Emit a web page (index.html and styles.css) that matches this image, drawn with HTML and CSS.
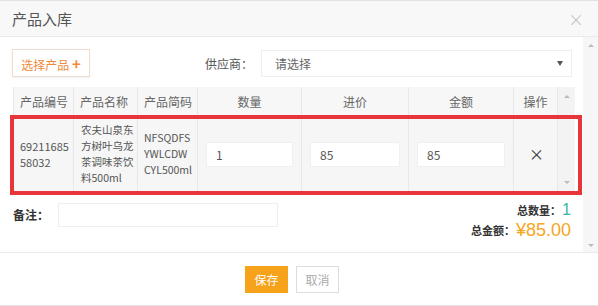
FILE: index.html
```html
<!DOCTYPE html>
<html lang="zh-CN">
<head>
<meta charset="utf-8">
<link rel="stylesheet" href="styles.css">
</head>
<body>
<div class="modal">
  <div class="hd">
    <span class="title">产品入库</span>
    <span class="close">×</span>
  </div>
  <div class="bd">
    <div class="bd-main">
      <div class="toolbar">
        <button class="pick">选择产品 <b class="plus">+</b></button>
        <label class="sup-label">供应商：</label>
        <div class="select"><span>请选择</span><i class="caret"></i></div>
      </div>
      <div class="grid">
        <div class="tbl-wrap">
          <table class="tbl">
            <colgroup>
              <col style="width:60px"><col style="width:64px"><col style="width:60px"><col style="width:104px"><col style="width:107px"><col style="width:105px"><col style="width:44px">
            </colgroup>
            <thead>
              <tr><th>产品编号</th><th>产品名称</th><th>产品简码</th><th class="c">数量</th><th class="c">进价</th><th class="c">金额</th><th class="c">操作</th></tr>
            </thead>
            <tbody>
              <tr>
                <td class="code">69211685<br>58032</td>
                <td class="name">农夫山泉东方树叶乌龙茶调味茶饮料500ml</td>
                <td class="abbr">NFSQDFS<br>YWLCDW<br>CYL500ml</td>
                <td class="num"><div class="inp">1</div></td>
                <td class="num"><div class="inp">85</div></td>
                <td class="num"><div class="inp">85</div></td>
                <td class="c x">×</td>
              </tr>
            </tbody>
          </table>
          <div class="iscroll"><span class="arr up"></span><span class="arr dn"></span></div>
        </div>
        <div class="redbox"></div>
      </div>
      <div class="bottom">
        <div class="remark">
          <span class="rlabel">备注：</span>
          <div class="rinput"></div>
        </div>
        <div class="totals">
          <div class="tq">总数量：<span class="qn">1</span></div>
          <div class="ta">总金额：<span class="amt">¥85.00</span></div>
        </div>
      </div>
    </div>
    <div class="oscroll"><span class="arr up"></span><span class="arr dn"></span></div>
  </div>
  <div class="ft">
    <button class="btn save">保存</button>
    <button class="btn cancel">取消</button>
  </div>
</div>
</body>
</html>
```
FILE: styles.css
```css
* { box-sizing: border-box; }
html, body { margin: 0; padding: 0; background: #fff; }
body {
  font-family: "Noto Sans CJK SC", "Open Sans", sans-serif;
  color: #555;
  width: 598px;
  height: 306px;
  overflow: hidden;
}
.modal {
  width: 598px;
  height: 306px;
  border-top: 1px solid #e2e2e2;
  border-bottom: 1px solid #e2e2e2;
  display: flex;
  flex-direction: column;
}
.hd {
  height: 36px;
  background: #f8f8f8;
  border-bottom: 1px solid #eaeaea;
  display: flex;
  align-items: center;
  justify-content: space-between;
  padding: 0 14px 0 12px;
}
.title { font-size: 15px; color: #555; }
.close { font-size: 16px; color: #bbb; line-height: 1; font-weight: 300; }
.bd {
  height: 216px;
  display: flex;
  border-bottom: 1px solid #eaeaea;
}
.bd-main {
  flex: 1;
  padding: 12px 0 0 12px;
}
.toolbar {
  display: flex;
  align-items: center;
  height: 28px;
}
.pick {
  width: 78px;
  height: 28px;
  border: 1px solid #f1ddd0;
  background: #fff;
  color: #f08a3a;
  font-family: inherit;
  font-size: 12px;
  padding: 0;
  box-shadow: 0 1px 2px rgba(0,0,0,0.06);
}
.plus { font-size: 15px; font-weight: 700; color: #f08a3a; }
.sup-label { margin-left: 115px; font-size: 12px; color: #555; width: 56px; }
.select {
  width: 311px;
  height: 27px;
  border: 1px solid #eee;
  display: flex;
  align-items: center;
  justify-content: space-between;
  padding: 0 8px 0 13px;
  font-size: 12px;
  color: #666;
}
.caret {
  width: 0; height: 0;
  border-left: 3px solid transparent;
  border-right: 3px solid transparent;
  border-top: 5px solid #555;
}
.grid {
  position: relative;
  margin-top: 10px;
  margin-left: 1px;
}
.tbl-wrap {
  display: flex;
  width: 562px;
  background: #f5f5f5;
}
.tbl {
  border-collapse: collapse;
  table-layout: fixed;
  width: 544px;
  font-size: 11px;
}
.tbl th {
  height: 29px;
  font-weight: 400;
  font-size: 12px;
  color: #666;
  text-align: left;
  padding: 0 6px;
  background: #f7f7f7;
  border: 1px solid #e8e8e8;
  border-top: 0;
  white-space: nowrap;
}
.tbl th.c, .tbl td.c { text-align: center; }
.tbl td {
  height: 76px;
  padding: 0 4px 0 6px;
  border: 1px solid #e8e8e8;
  line-height: 16px;
  color: #555;
  background: #f6f6f6;
  vertical-align: middle;
}
.tbl td.code { font-size: 11px; }
.tbl td.name { font-size: 10.5px; padding: 0 2px 0 7px; }
.tbl td.abbr { font-size: 10.5px; padding: 0 2px 0 6px; }
.tbl td.num { padding: 0 8px; }
.inp {
  height: 25px;
  background: #fff;
  border: 1px solid #f0f0f0;
  padding-left: 9px;
  line-height: 23px;
  font-size: 12px;
  color: #555;
}
.tbl td.x { font-size: 15px; color: #333; }
.iscroll {
  width: 18px;
  height: 105px;
  background: #f3f3f3;
  display: flex;
  flex-direction: column;
  justify-content: space-between;
  align-items: center;
  padding: 8px 0 8px;
}
.arr { width: 0; height: 0; border-left: 3px solid transparent; border-right: 3px solid transparent; }
.arr.up { border-bottom: 3px solid #bbb; }
.arr.dn { border-top: 3px solid #bbb; }
.redbox {
  position: absolute;
  left: -3px;
  top: 28px;
  width: 572px;
  height: 80px;
  border: 4px solid #e8353a;
}
.bottom {
  display: flex;
  justify-content: space-between;
  margin-top: 8px;
  padding-right: 12px;
}
.remark { display: flex; align-items: center; height: 24px; margin-top: 2px; }
.rlabel { font-size: 12px; color: #333; font-weight: 700; width: 46px; padding-left: 1px; }
.rinput { width: 220px; height: 24px; border: 1px solid #eee; }
.totals { text-align: right; font-size: 11px; color: #333; font-weight: 700; }
.tq { height: 19px; line-height: 19px; display: flex; justify-content: flex-end; align-items: center; }
.ta { height: 21px; line-height: 21px; display: flex; justify-content: flex-end; align-items: center; }
.qn { font-size: 16px; line-height: 16px; color: #3bb4a8; font-weight: 400; margin-left: 1px; font-family: "Liberation Sans", sans-serif; }
.amt { font-size: 18px; line-height: 18px; color: #f5a623; font-weight: 400; font-family: "Liberation Sans", sans-serif; margin-left: 1px; }
.oscroll {
  width: 15px;
  background: #f6f6f6;
  display: flex;
  flex-direction: column;
  justify-content: space-between;
  align-items: center;
  padding: 7px 0 5px;
}
.ft {
  flex: 1;
  display: flex;
  justify-content: center;
  align-items: center;
  gap: 8px;
  padding-right: 14px;
}
.btn {
  width: 43px;
  height: 27px;
  font-family: inherit;
  font-size: 12px;
  padding: 0;
}
.save { background: #f7a21b; border: 1px solid #f7a21b; color: #fff; }
.cancel { background: #fff; border: 1px solid #ddd; color: #aaa; }
```
